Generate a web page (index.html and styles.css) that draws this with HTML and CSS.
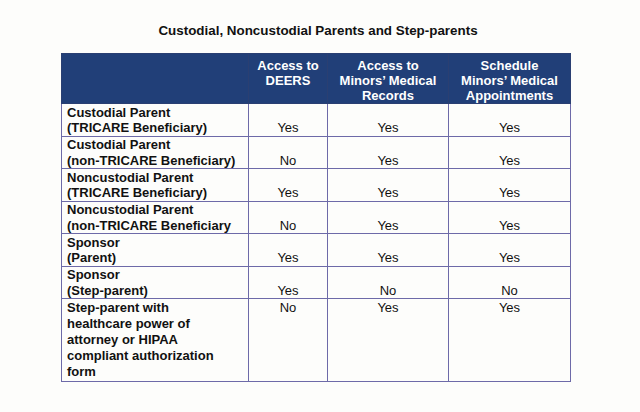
FILE: index.html
```
<!DOCTYPE html>
<html>
<head>
<meta charset="utf-8">
<link rel="stylesheet" href="styles.css">
</head>
<body>
<div class="page">
  <h1 class="title">Custodial, Noncustodial Parents and Step-parents</h1>
  <table class="grid">
    <colgroup>
      <col class="c1"><col class="c2"><col class="c3"><col class="c4">
    </colgroup>
    <thead>
      <tr>
        <th></th>
        <th>Access to<br>DEERS</th>
        <th>Access to<br>Minors’ Medical<br>Records</th>
        <th>Schedule<br>Minors’ Medical<br>Appointments</th>
      </tr>
    </thead>
    <tbody>
      <tr><td class="who">Custodial Parent<br>(TRICARE Beneficiary)</td><td>Yes</td><td>Yes</td><td>Yes</td></tr>
      <tr><td class="who">Custodial Parent<br>(non-TRICARE Beneficiary)</td><td>No</td><td>Yes</td><td>Yes</td></tr>
      <tr><td class="who">Noncustodial Parent<br>(TRICARE Beneficiary)</td><td>Yes</td><td>Yes</td><td>Yes</td></tr>
      <tr><td class="who">Noncustodial Parent<br>(non-TRICARE Beneficiary</td><td>No</td><td>Yes</td><td>Yes</td></tr>
      <tr><td class="who">Sponsor<br>(Parent)</td><td>Yes</td><td>Yes</td><td>Yes</td></tr>
      <tr><td class="who">Sponsor<br>(Step-parent)</td><td>Yes</td><td>No</td><td>No</td></tr>
      <tr class="last"><td class="who">Step-parent with<br>healthcare power of<br>attorney or HIPAA<br>compliant authorization<br>form</td><td>No</td><td>Yes</td><td>Yes</td></tr>
    </tbody>
  </table>
</div>
</body>
</html>
```
FILE: styles.css
```
html, body {
  margin: 0;
  padding: 0;
  background: #fdfdfb;
}
.page {
  width: 640px;
  height: 412px;
  font-family: "Liberation Sans", Arial, sans-serif;
  color: #111;
}
.title {
  margin: 0;
  padding-top: 22px;
  height: 31px;
  text-align: center;
  font-size: 13.4px;
  font-weight: bold;
  line-height: 18px;
  padding-right: 4px;
}
.grid {
  margin-left: 61px;
  width: 509px;
  border-collapse: collapse;
  table-layout: fixed;
  font-size: 13px;
  line-height: 15.5px;
}
.c1 { width: 187px; }
.c2 { width: 79px; }
.c3 { width: 121px; }
.c4 { width: 122px; }
.grid th {
  background: #213f78;
  color: #fff;
  font-weight: bold;
  vertical-align: top;
  text-align: center;
  height: 50px;
  padding: 4px 0 0 0;
  line-height: 15px;
  border: 1.5px solid #2a3f72;
  box-sizing: border-box;
}
.grid td {
  border: 1.5px solid #6d6aa8;
  text-align: center;
  vertical-align: bottom;
  height: 32.5px;
  padding: 0;
  box-sizing: border-box;
}
.grid td.who {
  text-align: left;
  font-weight: bold;
  padding-left: 5px;
}
.grid .last td {
  vertical-align: top;
  height: 83px;
  padding-top: 1px;
  line-height: 16px;
}
```
